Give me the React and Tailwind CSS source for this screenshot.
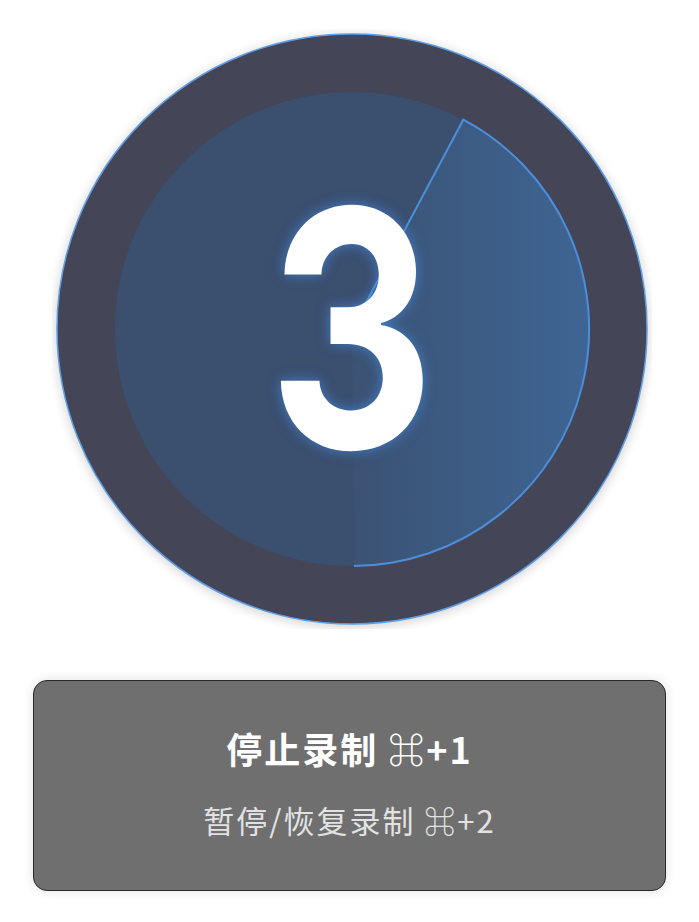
import React from "react";

const Countdown = ({ value }) => {
  return (
    <div className="relative w-[600px] h-[600px] ml-[4px]">
      <svg width="600" height="600" viewBox="0 0 600 600" className="absolute inset-0">
        <defs>
          <linearGradient id="wedge" x1="0" y1="0" x2="1" y2="0">
            <stop offset="0" stopColor="#3b5273" />
            <stop offset="1" stopColor="#3e6594" />
          </linearGradient>
          <filter id="soft" x="-20%" y="-20%" width="140%" height="140%">
            <feGaussianBlur stdDeviation="6" />
          </filter>
        </defs>
        <circle cx="300" cy="302" r="296" fill="#000" opacity="0.18" filter="url(#soft)" />
        <circle cx="300" cy="300" r="295" fill="#454558" stroke="#5d9de6" strokeWidth="1.5" />
        <circle cx="300" cy="300" r="237" fill="#3b4f6f" />
        <path
          d="M300 300 L411.3 90.7 A237 237 0 0 1 302 537 Z"
          fill="url(#wedge)"
        />
        <path
          d="M300 300 L411.3 90.7 A237 237 0 0 1 302 537"
          fill="none"
          stroke="#4b8fdc"
          strokeWidth="2"
        />
      </svg>
      <div className="absolute inset-0 flex items-center justify-center">
        <span
          className="text-white font-bold leading-none text-[330px] pb-[2px] scale-x-[0.78] [text-shadow:0_0_14px_rgba(70,140,230,0.75)]"
          style={{ fontFamily: "Inter, 'Noto Sans', sans-serif" }}
        >
          {value}
        </span>
      </div>
    </div>
  );
};

export default function App() {
  return (
    <div
      className="min-h-screen w-full bg-white flex flex-col items-center pt-[29px]"
      style={{ fontFamily: "'Noto Sans CJK SC', 'Noto Sans', sans-serif" }}
    >
      <Countdown value="3" />
      <div className="mt-[51px] w-[633px] h-[211px] pb-[6px] rounded-[14px] border border-[#2a2a2a] bg-[#6f6f6f] shadow-[0_0_12px_rgba(0,0,0,0.12)] flex flex-col items-center justify-center gap-[38px]">
        <div className="text-white font-bold text-[36px] leading-none tracking-[2px]">
          停止录制 ⌘+1
        </div>
        <div className="text-[#e2e2e2] text-[31px] leading-none tracking-[2px]">
          暂停/恢复录制 ⌘+2
        </div>
      </div>
    </div>
  );
}
